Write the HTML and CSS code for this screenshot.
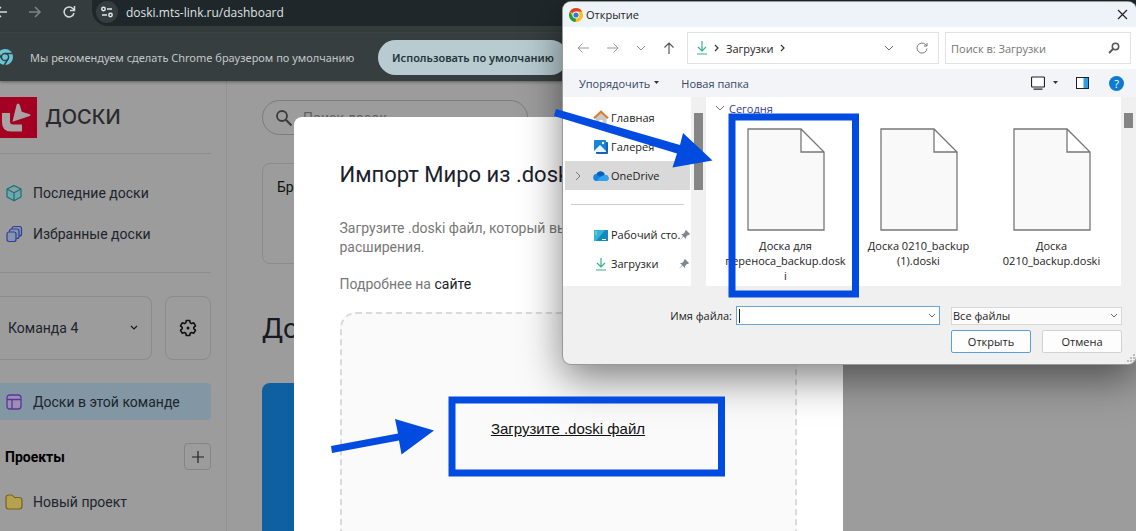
FILE: index.html
```html
<!DOCTYPE html>
<html lang="ru">
<head>
<meta charset="utf-8">
<title>Доски</title>
<link rel="stylesheet" href="styles.css">
</head>
<body>
<div class="screen">
  <header class="toolbar">
    <button class="tool-btn" aria-label="Назад"><svg width="14" height="14" viewBox="0 0 14 14"><path d="M13 7H2M7 2L2 7l5 5" fill="none" stroke="#d5dadb" stroke-width="1.5"/></svg></button>
    <button class="tool-btn" aria-label="Вперёд"><svg width="14" height="14" viewBox="0 0 14 14"><path d="M1 7h11M7 2l5 5-5 5" fill="none" stroke="#7d8486" stroke-width="1.5"/></svg></button>
    <button class="tool-btn" aria-label="Обновить"><svg width="14" height="14" viewBox="0 0 14 14"><path d="M12 8A5 5 0 1 1 10.800 3.500L12.500 5.200M12.500 1v4.500H8" fill="none" stroke="#d5dadb" stroke-width="1.500"/></svg></button>
    <div class="address">
      <span class="tune"><svg width="14" height="14" viewBox="0 0 14 14"><g fill="none" stroke="#e2e7e8" stroke-width="1.500"><circle cx="3.500" cy="4" r="1.700"/><path d="M7 4h5M2 10h5"/><circle cx="10.500" cy="10" r="1.700"/></g></svg></span>
      <input class="url" aria-label="Адрес" value="doski.mts-link.ru/dashboard">
    </div>
  </header>
  <div class="infobar">
    <svg class="info-logo" width="18" height="18" viewBox="0 0 18 18"><circle cx="9" cy="9" r="8" fill="#69c6d9"/><circle cx="9" cy="9" r="3.600" fill="#69c6d9" stroke="#363e40" stroke-width="1.500"/><path d="M9 5.400h7.500M5.900 10.800L2.100 4.500M12.100 10.800L8.300 17" stroke="#363e40" stroke-width="1.500"/></svg>
    <span class="info-text">Мы рекомендуем сделать Chrome браузером по умолчанию</span>
    <button class="default-btn">Использовать по умолчанию</button>
  </div>
  <div class="app">
    <nav class="sidebar">
      <div class="brand">
        <svg width="37" height="41" viewBox="0 0 37 41"><path fill="#a30022" d="M0 0h37v41H0z"/><path fill="#a9a3a4" d="M2 16h8v8.500q0 3 3 3h9V34.500H11q-9 0-9-9z"/><path fill="#a9a3a4" d="M18 6.500q1.300 0 1.800 1.800l2 6.500 8 2.500q1.500.8 0 1.700L12.500 24.800 16.500 8q.4-1.500 1.500-1.500z"/></svg>
        <span class="brand-name">ДОСКИ</span>
      </div>
      <div class="links">
        <a class="link" href="#"><svg width="18" height="18" viewBox="0 0 18 18"><path d="M9 1.500l7 3.500v8l-7 3.800L2 13V5zM2 5l7 3.800L16 5M9 8.800v8" fill="#72a6aa" stroke="#1b6f79" stroke-width="1.200" stroke-linejoin="round"/></svg>Последние доски</a>
        <a class="link" href="#"><svg width="18" height="18" viewBox="0 0 18 18"><g fill="#8494b2" stroke="#2f3f92" stroke-width="1.200"><rect x="7" y="1.500" width="9.500" height="9.500" rx="2"/><rect x="4.500" y="4" width="9.500" height="9.500" rx="2"/><rect x="2" y="7" width="9" height="9.500" rx="2"/></g></svg>Избранные доски</a>
      </div>
      <div class="team-row">
        <button class="team">Команда 4<svg width="8" height="6" viewBox="0 0 8 6"><path d="M1 1l3 3 3-3" fill="none" stroke="#151922" stroke-width="1.200"/></svg></button>
        <button class="gear" aria-label="Настройки"><svg width="18" height="18" viewBox="0 0 18 18"><path d="M7.300 1.500h3.400l.5 2.300 1.400.8 2.200-.8 1.700 3-1.700 1.600v1.300l1.700 1.600-1.700 2.900-2.200-.7-1.400.8-.5 2.200H7.300l-.5-2.200-1.400-.8-2.200.7-1.700-2.900 1.700-1.600V8.400L1.500 6.800l1.700-3 2.200.8 1.400-.8z" fill="none" stroke="#111" stroke-width="1.600" stroke-linejoin="round"/><circle cx="9" cy="9" r="1.500" fill="#111"/></svg></button>
      </div>
      <a class="link active" href="#"><svg width="18" height="18" viewBox="0 0 18 18"><path d="M5 2h8q3 0 3 3v8q0 3-3 3H5q-3 0-3-3V5q0-3 3-3zM2 6.500h14M7 6.500V16" fill="#9d8fb3" stroke="#58379b" stroke-width="1.300"/></svg>Доски в этой команде</a>
      <div class="projects"><h2 class="projects-title">Проекты</h2><button class="plus" aria-label="Добавить проект"><svg width="14" height="14" viewBox="0 0 14 14"><path d="M7 1v12M1 7h12" stroke="#222" stroke-width="1.200"/></svg></button></div>
      <a class="link project" href="#"><svg width="18" height="18" viewBox="0 0 18 18"><path d="M1 5q0-3 3-3h2q1.500 0 2.500 1.500T11 4.500h3q3 0 3 3V13q0 3-3 3H4q-3 0-3-3z" fill="#b5a24f" stroke="#77651b" stroke-width="1.200"/></svg>Новый проект</a>
    </nav>
    <main class="main">
      <label class="search"><svg width="18" height="18" viewBox="0 0 18 18"><circle cx="7" cy="7" r="5" fill="none" stroke="#3b3b3b" stroke-width="1.800"/><path d="M10.800 10.800L16.500 16.500" stroke="#3b3b3b" stroke-width="2"/></svg><input class="search-input" aria-label="Поиск досок" placeholder="Поиск досок"></label>
      <div class="template">Брейншторм</div>
      <h1 class="boards-title">Доски</h1>
      <div class="board"></div>
    </main>
  </div>

  <section class="modal">
    <h2 class="modal-title">Импорт Миро из .doski</h2>
    <p class="modal-text">Загрузите .doski файл, который вы скачали с помощью нашего расширения.</p>
    <p class="modal-text">Подробнее на <a class="site" href="#">сайте</a></p>
    <div class="drop"><a class="upload" href="#">Загрузите .doski файл</a></div>
  </section>

  <section class="dialog">
    <div class="titlebar">
      <svg width="14" height="14" viewBox="0 0 14 14"><circle cx="7" cy="7" r="7" fill="#fbc116"/><path d="M7 7L.94 3.500A7 7 0 0 1 13.060 3.500H7z" fill="#e33b2e"/><path d="M.94 3.500L4 9l3 1.500L6.500 14A7 7 0 0 1 .94 3.500z" fill="#229a4b"/><circle cx="7" cy="7" r="3.400" fill="#fff"/><circle cx="7" cy="7" r="2.600" fill="#3476e4"/></svg>
      <span class="titlebar-text">Открытие</span>
      <button class="bare" aria-label="Закрыть"><svg width="11" height="11" viewBox="0 0 11 11"><path d="M1 1l9 9M10 1l-9 9" stroke="#222" stroke-width="1.200"/></svg></button>
    </div>
    <div class="navrow">
      <button class="bare" aria-label="Назад"><svg width="12" height="12" viewBox="0 0 12 12"><path d="M12 6H1M5.500 1.500L1 6l4.500 4.500" fill="none" stroke="#999"/></svg></button>
      <button class="bare" aria-label="Вперёд"><svg width="12" height="12" viewBox="0 0 12 12"><path d="M0 6h11M6.500 1.500L11 6l-4.500 4.500" fill="none" stroke="#999"/></svg></button>
      <button class="bare" aria-label="Недавние"><svg width="8" height="12" viewBox="0 0 8 12"><path d="M0 4l4 4 4-4" fill="none" stroke="#888"/></svg></button>
      <button class="bare" aria-label="Вверх"><svg width="12" height="12" viewBox="0 0 12 12"><path d="M6 12V1M1.500 5.500L6 1l4.500 4.500" fill="none" stroke="#555" stroke-width="1.200"/></svg></button>
      <div class="path">
        <svg width="12" height="14" viewBox="0 0 12 14"><path d="M6 0v10M2 6l4 4 4-4M1 13h10" fill="none" stroke="#35ae91" stroke-width="1.200"/></svg>
        <svg width="6" height="8" viewBox="0 0 6 8"><path d="M1 1l3 3-3 3" fill="none" stroke="#333" stroke-width="1.200"/></svg>
        <span>Загрузки</span>
        <svg width="6" height="8" viewBox="0 0 6 8"><path d="M1 1l3 3-3 3" fill="none" stroke="#333" stroke-width="1.200"/></svg>
        <button class="bare path-more" aria-label="Предыдущие расположения"><svg width="10" height="8" viewBox="0 0 10 8"><path d="M1 2l4 4 4-4" fill="none" stroke="#666"/></svg></button>
        <button class="bare path-refresh" aria-label="Обновить"><svg width="12" height="12" viewBox="0 0 12 12"><path d="M11 6.500A5 5 0 1 1 9.500 2.500L11 4M11 1v3H8" fill="none" stroke="#777"/></svg></button>
      </div>
      <label class="find"><input class="find-input" aria-label="Поиск" placeholder="Поиск в: Загрузки"><svg width="12" height="12" viewBox="0 0 12 12"><circle cx="7.500" cy="4.500" r="3.200" fill="none" stroke="#555" stroke-width="1.500"/><path d="M5 7L1 11" stroke="#555" stroke-width="1.800"/></svg></label>
    </div>
    <div class="commands">
      <button class="bare cmd">Упорядочить<svg width="5" height="4" viewBox="0 0 5 4"><path d="M0 0h5L2.500 3z" fill="#333"/></svg></button>
      <button class="bare cmd">Новая папка</button>
      <button class="bare view" aria-label="Вид"><svg width="14" height="14" viewBox="0 0 14 14"><rect x=".5" y="1" width="13" height="10" rx="1" fill="#fff" stroke="#222" stroke-width="1.200"/><path d="M2.500 13.200h9" stroke="#222" stroke-width="1.200"/></svg><svg width="5" height="4" viewBox="0 0 5 4"><path d="M0 0h5L2.500 3z" fill="#333"/></svg></button>
      <button class="bare" aria-label="Область просмотра"><svg width="13" height="12" viewBox="0 0 13 12"><rect x=".5" y=".5" width="12" height="11" fill="#fff" stroke="#222"/><path d="M7.500 1H12v10H7.500z" fill="#2c9be0"/></svg></button>
      <button class="help" aria-label="Справка">?</button>
    </div>
    <div class="browser">
      <ul class="tree">
        <li class="node"><svg class="node-icon" width="16" height="16" viewBox="0 0 16 16"><path d="M2.500 7L8 2l5.500 5v8h-11z" fill="#c9c9cc"/><path d="M6.300 10h3.400v5H6.300z" fill="#fff"/><path d="M1 8.200L8 1.700l7 6.500" fill="none" stroke="#df7a2d" stroke-width="2"/></svg>Главная</li>
        <li class="node"><svg class="node-icon" width="16" height="16" viewBox="0 0 16 16"><rect x="3" y="3" width="12" height="12" rx="1" fill="#1265b5"/><rect x="1" y="1" width="12" height="12" rx="1" fill="#1884d8"/><path d="M1 12l6-6 6 6v1H1z" fill="#e9f6ff"/><circle cx="10" cy="4" r="1.200" fill="#fff"/></svg>Галерея</li>
        <li class="node selected"><svg class="chev" width="6" height="10" viewBox="0 0 6 10"><path d="M1 1l4 4-4 4" fill="none" stroke="#777"/></svg><svg class="node-icon" width="16" height="16" viewBox="0 0 16 16"><path d="M4 13a3.500 3.500 0 0 1-.5-7A4.500 4.500 0 0 1 12 7a3 3 0 0 1 1 6z" fill="#1684dc"/><path d="M3.500 6A4.500 4.500 0 0 1 11.500 6L7 9z" fill="#0a5fb8"/><path d="M7 9l5-2a3 3 0 0 1 1 6H4z" fill="#2fa3ee"/></svg>OneDrive</li>
        <li class="rule"></li>
        <li class="node"><svg class="node-icon" width="16" height="16" viewBox="0 0 16 16"><path d="M1 3h14v11H1z" fill="#1689bd"/><path d="M1 3h11L3 14H1z" fill="#36b4d3"/><path d="M2.500 5h1M2.500 7h1M9 12.500h4" stroke="#fff"/></svg><span>Рабочий сто.</span><svg class="pin" width="10" height="10" viewBox="0 0 10 10"><path d="M6 0l4 4-1 1-1 0-2 2v2L3.500 6.500 0 10l3-4L1 4h2l2-2V1z" fill="#7e888e"/></svg></li>
        <li class="node"><svg class="node-icon" width="16" height="16" viewBox="0 0 16 16"><path d="M8 2v9M4 7l4 4 4-4M3 14h10" fill="none" stroke="#35ae91" stroke-width="1.200"/></svg><span>Загрузки</span><svg class="pin" width="10" height="10" viewBox="0 0 10 10"><path d="M6 0l4 4-1 1-1 0-2 2v2L3.500 6.500 0 10l3-4L1 4h2l2-2V1z" fill="#7e888e"/></svg></li>
      </ul>
      <div class="scroll"><div class="thumb tall"></div></div>
      <div class="files">
        <div class="group"><svg width="8" height="6" viewBox="0 0 8 6"><path d="M0 1l4 4 4-4" fill="none" stroke="#777"/></svg>Сегодня</div>
        <div class="tiles">
          <div class="tile"><svg width="78" height="103" viewBox="0 0 78 103"><path d="M1 1h53l23 23v78H1zM54 1v23h23" fill="#f9f9f9" stroke="#777" stroke-width="1.300"/></svg><span>Доска для<br>переноса_backup.dosk<br>i</span></div>
          <div class="tile"><svg width="78" height="103" viewBox="0 0 78 103"><path d="M1 1h53l23 23v78H1zM54 1v23h23" fill="#f9f9f9" stroke="#777" stroke-width="1.300"/></svg><span>Доска 0210_backup<br>(1).doski</span></div>
          <div class="tile"><svg width="78" height="103" viewBox="0 0 78 103"><path d="M1 1h53l23 23v78H1zM54 1v23h23" fill="#f9f9f9" stroke="#777" stroke-width="1.300"/></svg><span>Доска<br>0210_backup.doski</span></div>
        </div>
      </div>
      <div class="scroll"><div class="thumb"></div></div>
    </div>
    <div class="footer">
      <div class="frow">
        <label class="flabel" for="fname">Имя файла:</label>
        <div class="combo"><span class="caret"></span><input class="combo-input" id="fname"><svg width="8" height="6" viewBox="0 0 8 6"><path d="M1 1l3 3 3-3" fill="none" stroke="#666"/></svg></div>
        <div class="filter"><select class="filter-select" aria-label="Тип файлов"><option>Все файлы</option></select><svg class="filter-arrow" width="8" height="6" viewBox="0 0 8 6"><path d="M1 1l3 3 3-3" fill="none" stroke="#666"/></svg></div>
      </div>
      <div class="frow buttons"><button class="btn primary">Открыть</button><button class="btn">Отмена</button></div>
    </div>
    <svg class="grip" width="8" height="8" viewBox="0 0 8 8"><path d="M6 0h2v2H6zM3 3h2v2H3zM6 3h2v2H6zM0 6h2v2H0zM3 6h2v2H3zM6 6h2v2H6z" fill="#bbb"/></svg>
  </section>

  <svg class="marks" width="1136" height="531" viewBox="0 0 1136 531">
    <g fill="none" stroke="#024be0" stroke-width="7"><path d="M732 117h123.500v177H732z"/><path d="M452 400h269.500v73H452z"/></g>
    <g fill="#024be0"><path d="M556 109L680 145 683 133 712.500 160.500 672.500 167.500 677 153.500 554 116z"/><path d="M331 446L398 433.500 395 419 434 430.500 401.500 454.500 399 440.500 332 453z"/></g>
  </svg>
</div>
</body>
</html>
```
FILE: styles.css
```css
* { box-sizing: border-box; }
body { margin: 0; font-family: Roboto, sans-serif; }
button, input, select { font: inherit; color: inherit; margin: 0; padding: 0; border: 0; background: none; }
svg { display: block; flex: none; }
a { color: inherit; text-decoration: none; }
h1, h2, p, ul { margin: 0; padding: 0; font-weight: 400; }

.screen { position: relative; height: 100vh; overflow: hidden; display: flex; flex-direction: column; background: #9c9c9c; }

/* browser chrome */
.toolbar { display: flex; height: 33px; flex: none; padding-bottom: 6px; gap: 20px; background: #353c3e; border-bottom: 1px solid #41484b; font-family: "Open Sans", sans-serif; }
.tool-btn { width: 14px; height: 24px; display: flex; align-items: center; }
.tool-btn:first-child { margin-left: -6px; }
.address { flex: 1; display: flex; align-items: flex-start; margin-left: -4px; padding-left: 4px; gap: 8px; background: #1f272a; border-bottom-left-radius: 16px; }
.tune { width: 22px; height: 22px; margin-top: 1px; display: flex; align-items: center; justify-content: center; border-radius: 50%; background: #353d40; }
.url { flex: 1; height: 24px; font-size: 12px; color: #dfe3e4; }
.infobar { display: flex; align-items: center; flex: none; height: 48px; background: #363e40; font-family: "Noto Sans", sans-serif; font-size: 11px; color: #c3c8c9; box-shadow: 0 1px 3px rgba(0,0,0,.4); z-index: 1; }
.info-logo { margin-left: -4px; }
.info-text { margin-left: 16px; width: 334px; white-space: nowrap; }
.default-btn { margin-left: 14px; height: 35px; padding: 0 14px; border-radius: 18px; background: #b7cbd0; color: #263538; font-weight: 600; white-space: nowrap; }

/* page */
.app { flex: 1; display: flex; min-height: 0; }
.sidebar { width: 227px; flex: none; padding-right: 15px; border-right: 1px solid #929292; font-size: 14px; color: #20242c; }
.brand { height: 73px; display: flex; align-items: center; gap: 8px; border-bottom: 1px solid #8d8d8d; }
.brand-name { font-family: Inter, sans-serif; font-size: 20px; font-weight: 500; color: #2a2a2c; }
.links { padding: 18px 0; border-bottom: 1px solid #8d8d8d; }
.link { display: flex; align-items: center; gap: 10px; height: 41px; padding-left: 5px; white-space: nowrap; }
.team-row { display: flex; gap: 13px; margin-top: 23px; height: 64px; }
.team, .gear { border: 1px solid #8b8b8b; border-radius: 8px; display: flex; align-items: center; }
.team { flex: 1; justify-content: space-between; padding: 0 13px 0 8px; border-left: 0; border-top-left-radius: 0; border-bottom-left-radius: 0; }
.gear { width: 46px; justify-content: center; }
.active { margin-top: 23px; height: 37px; background: #8297a3; border-radius: 0 4px 4px 0; }
.projects { display: flex; align-items: center; justify-content: space-between; margin-top: 23px; padding-left: 5px; }
.projects-title { font-size: 14px; font-weight: 700; color: #000; }
.plus { width: 27px; height: 27px; border: 1px solid #858585; border-radius: 4px; display: flex; align-items: center; justify-content: center; }
.project { margin-top: 11px; }
.main { flex: 1; padding: 19px 36px 0 35px; }
.search { display: flex; align-items: center; gap: 10px; width: 266px; height: 35px; padding-left: 12px; border: 1px solid #7c7c7c; border-radius: 18px; }
.search-input { width: 200px; font-size: 14px; }
.search-input::placeholder { color: #606060; }
.template { width: 160px; height: 101px; margin-top: 28px; padding: 14px; border: 1px solid #8b8b8b; border-radius: 8px; font-size: 14px; line-height: 18px; color: #111; }
.boards-title { margin-top: 48px; font-size: 28px; line-height: 34px; color: #151a22; }
.board { width: 266px; height: 200px; margin-top: 37px; border-radius: 8px 8px 0 0; background: #0f60a0; }

/* import window */
.modal { position: absolute; z-index: 2; top: 117px; bottom: 0; left: 0; right: 0; width: 549px; max-width: 90%; margin: 0 auto; padding: 42px 46px 0; border-radius: 8px 8px 0 0; background: #fff; overflow: hidden; }
.modal-title { font-size: 22px; line-height: 32px; margin-bottom: 28px; color: #1b202b; }
.modal-text { font-size: 14px; line-height: 19px; margin-bottom: 18px; color: #787878; }
.site { color: #1b202b; }
.drop { height: 340px; border: 2px dashed #dadada; border-radius: 16px; background: #fafafa; padding-top: 105px; text-align: center; }
.upload { font-family: "Liberation Sans", sans-serif; font-size: 15px; line-height: 20px; color: #111; text-decoration: underline; }

/* file chooser */
.dialog { position: absolute; z-index: 3; top: 2px; right: 0; width: 573px; max-width: 100%; border-radius: 8px; background: #f0f0f0; overflow: hidden; font-family: "Open Sans", sans-serif; font-size: 11px; color: #1c1c1c; box-shadow: 0 0 0 1px #999, 0 14px 40px rgba(0,0,0,.5); }
.bare { display: flex; align-items: center; }
.titlebar { display: flex; align-items: center; gap: 3px; height: 25px; padding: 0 8px 0 6px; background: #eef3f9; }
.titlebar-text { flex: 1; }
.navrow { display: flex; align-items: center; height: 42px; padding: 0 5px 0 14px; gap: 18px; background: #fff; }
.path { flex: 1; height: 32px; margin-left: -6px; padding: 0 10px 0 8px; display: flex; align-items: center; gap: 6px; border: 1px solid #e2e2e2; }
.path-more { margin-left: auto; }
.path-refresh { margin-left: 16px; }
.find { width: 186px; height: 32px; margin-left: -12px; padding: 0 10px 0 5px; display: flex; align-items: center; border: 1px solid #e2e2e2; }
.find-input { flex: 1; min-width: 0; }
.find-input::placeholder { color: #757575; }
.commands { display: flex; align-items: center; height: 28px; padding: 0 12px 0 16px; gap: 20px; background: #f3f4f7; }
.cmd { gap: 4px; margin-right: 2px; color: #354766; }
.view { margin-left: auto; margin-right: -2px; gap: 8px; }
.help { width: 15px; height: 15px; border-radius: 50%; background: #0f7bd0; color: #fff; line-height: 15px; text-align: center; }
.browser { display: flex; height: 189px; }
.tree { width: 128px; flex: none; padding: 6px 1px 0 2px; list-style: none; background: #fff; }
.node { display: flex; align-items: center; height: 29px; padding: 0 1px 0 28px; white-space: nowrap; }
.node-icon { margin-right: 2px; }
.selected { background: #d9d9d9; }
.chev { margin: 0 12px 0 -18px; }
.pin { margin-left: auto; }
.rule { height: 30px; padding: 14px 6px; }
.rule::before { content: ""; display: block; height: 1px; background: #cfcfcf; }
.scroll { width: 15px; flex: none; padding: 16px 3px 0; background: #f0f0f0; }
.thumb { height: 15px; background: #858585; }
.tall { height: 77px; }
.files { flex: 1; min-width: 0; background: #fff; padding: 3px 3px 0 13px; }
.group { display: flex; align-items: center; gap: 5px; height: 16px; margin-left: -3px; color: #31408e; }
.tiles { display: grid; grid-template-columns: repeat(3, 1fr); padding-top: 12px; }
.tile { display: flex; flex-direction: column; align-items: center; gap: 7px; text-align: center; line-height: 15px; white-space: nowrap; }
.footer { padding: 20px 14px 11px; }
.frow { display: flex; align-items: center; }
.flabel { margin-left: auto; }
.combo { display: flex; align-items: center; width: 204px; height: 19px; margin: 0 11px 0 4px; padding: 0 3px 0 2px; border: 1px solid #66a5da; background: #fff; }
.caret { width: 1px; height: 14px; background: #222; }
.combo-input { flex: 1; min-width: 0; }
.filter { position: relative; width: 171px; height: 18px; border: 1px solid #d8d8d8; background: #fbfbfb; }
.filter-select { appearance: none; width: 100%; height: 16px; line-height: 16px; padding-left: 1px; }
.filter-arrow { position: absolute; right: 3px; top: 5px; pointer-events: none; }
.buttons { justify-content: flex-end; gap: 11px; margin-top: 5px; }
.btn { width: 80px; height: 23px; border: 1px solid #d2d2d2; border-radius: 2px; background: #fdfdfd; }
.primary { border-color: #5a9fd6; }
.grip { position: absolute; right: 1px; bottom: 2px; }

.marks { position: absolute; z-index: 4; top: 0; left: 0; pointer-events: none; }
```
